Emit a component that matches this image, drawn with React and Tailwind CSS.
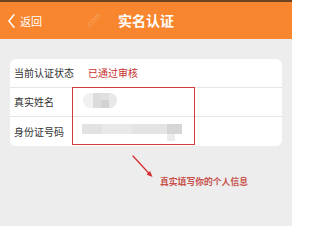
import React from 'react';

const rows = [
    { label: '当前认证状态', kind: 'status' },
    { label: '真实姓名', kind: 'name' },
    { label: '身份证号码', kind: 'id' },
];

const RowValue = ({ kind }) => {
    if (kind === 'status') {
        return <span className="text-[10px] text-[#c8322e] leading-none">已通过审核</span>;
    }
    if (kind === 'name') {
        return (
            <div className="ml-[-5px] mt-[-3px] flex h-[15px] w-[34px] overflow-hidden rounded-full bg-[#ececec] blur-[0.6px]">
                <div className="w-[10px] bg-[#f1f1f1]" />
                <div className="w-[8px] bg-[#dcdcdc]" />
                <div className="flex w-[8px] flex-col">
                    <div className="h-[7px] bg-[#e0e0e0]" />
                    <div className="flex-1 bg-[#d2d2d2]" />
                </div>
                <div className="flex-1 bg-[#e8e8e8]" />
            </div>
        );
    }
    return (
        <div className="ml-[-6px] mt-[-5px] relative blur-[0.5px]">
            <div className="flex h-[10px] w-[100px]">
                <div className="w-[20px] bg-[#e2e2e2]" />
                <div className="w-[30px] bg-[#e9e9e9]" />
                <div className="w-[35px] bg-[#e4e4e4]" />
                <div className="flex-1 bg-[#d6d6d6]" />
            </div>
            <div className="absolute left-[85px] top-[10px] h-[7px] w-[8px] bg-[#ececec]" />
        </div>
    );
};

const App = () => {
    return (
        <div className="w-[292px] h-[226px] overflow-hidden bg-[#ededee] font-['Noto_Sans_CJK_SC','Noto_Sans',sans-serif]">
            <div className="h-[2px] bg-[#6b4222]" />
            <div className="relative flex h-[37px] items-center justify-center bg-[#f7862f]">
                <div className="absolute left-[8px] top-[12px] flex items-center gap-[5px] text-white">
                    <svg width="7" height="14" viewBox="0 0 7 14" fill="none">
                        <path d="M6 0.8 L0.9 7 L6 13.2" stroke="white" strokeWidth="1.4" strokeLinecap="round" strokeLinejoin="round" />
                    </svg>
                    <span className="text-[11px] leading-none">返回</span>
                </div>
                <span className="text-[14px] font-bold leading-none text-white mt-[-1px]">实名认证</span>
                <span className="absolute left-[84px] top-[14px] -rotate-45 text-[8px] leading-none text-white/25">.com</span>
            </div>

            <div className="relative mx-[10px] mt-[20px] overflow-hidden rounded-[6px] bg-white">
                {rows.map((row, index) => (
                    <div
                        key={row.label}
                        className={`flex h-[29px] items-center ${index < rows.length - 1 ? 'border-b border-[#e6e6e6]' : ''}`}
                    >
                        <span className="w-[78px] pl-[4px] text-[10px] leading-none text-[#333333]">{row.label}</span>
                        <RowValue kind={row.kind} />
                    </div>
                ))}
                <div className="absolute left-[62px] top-[28px] h-[58px] w-[123px] border-[1.5px] border-[#d23c3c]" />
            </div>

            <div className="flex pl-[131px] pt-[9px]">
                <svg width="24" height="24" viewBox="0 0 24 24" fill="none">
                    <path d="M2 1 L19 19.5" stroke="#d42a2a" strokeWidth="1.2" strokeLinecap="round" />
                    <path d="M21.5 22 L15.5 19.5 L19 16 Z" fill="#d42a2a" />
                </svg>
                <span className="ml-[5px] mt-[23px] text-[8.8px] font-bold leading-none text-[#c8504a]">真实填写你的个人信息</span>
            </div>
        </div>
    );
};

export default App;
